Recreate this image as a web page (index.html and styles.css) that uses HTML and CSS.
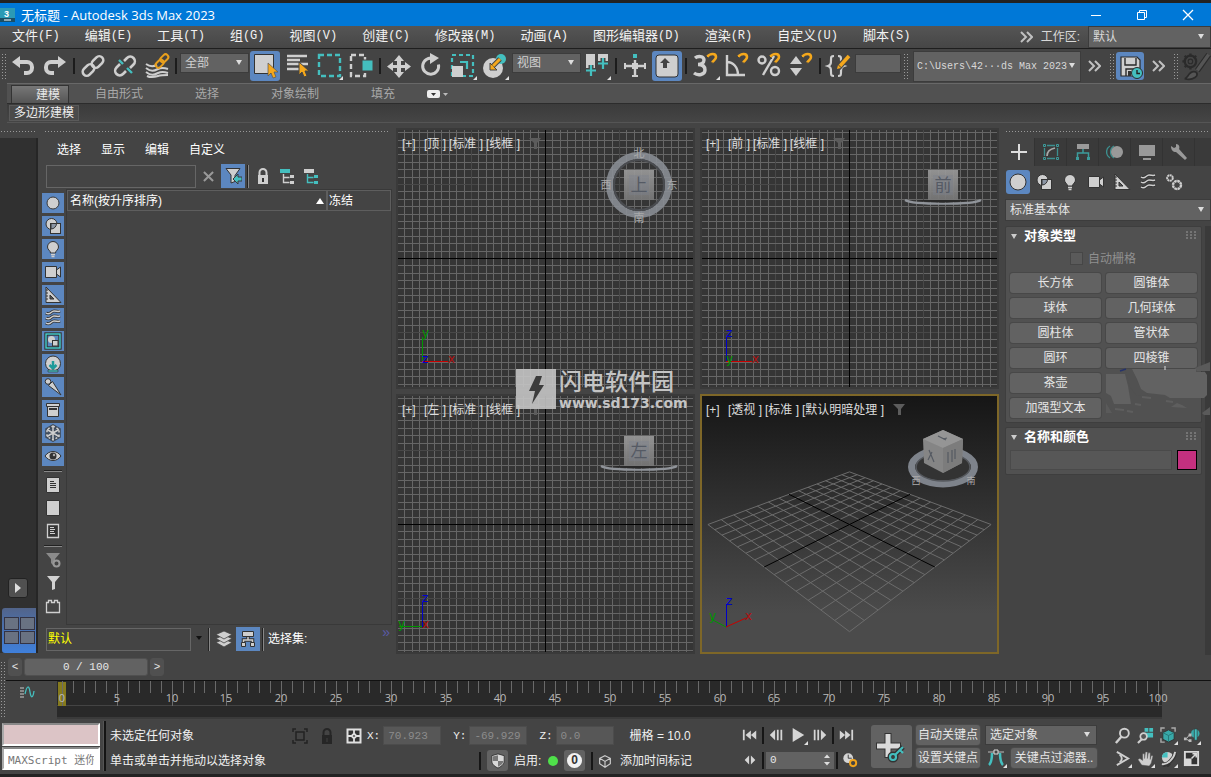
FILE: index.html
```html
<!DOCTYPE html>
<html lang="zh-CN">
<head>
<meta charset="utf-8">
<title>无标题 - Autodesk 3ds Max 2023</title>
<link rel="stylesheet" href="styles.css">
</head>
<body>
<svg class="defs" aria-hidden="true">
  <defs>
    <symbol id="flyout" viewBox="0 0 4 4"><path d="M4 0v4H0z" fill="#e0e0e0"/></symbol>
    <symbol id="i-dots" viewBox="0 0 12 12"><path d="M1 2h2M5 2h2M9 2h2M1 5h2M5 5h2M9 5h2M1 8h2M5 8h2M9 8h2" stroke="#999" stroke-width="1"/></symbol>
    <symbol id="i-chev" viewBox="0 0 14 14"><path d="M2 2l5 5-5 5M8 2l5 5-5 5" fill="none" stroke="#c0c0c0" stroke-width="2"/></symbol>
    <symbol id="i-undo" viewBox="0 0 32 32"><path d="M5 12l8-6v4h7a7 7 0 0 1 7 7v1a7 7 0 0 1-7 7h-3v-4h3a3 3 0 0 0 3-3v-1a3 3 0 0 0-3-3h-7v4z" fill="#cfcfcf"/></symbol>
    <symbol id="i-link" viewBox="0 0 32 32"><g fill="none" stroke="#cfcfcf" stroke-width="2.600"><rect x="14" y="8" width="13" height="8" rx="4" transform="rotate(-45 20.500 12)"/><rect x="5" y="16" width="13" height="8" rx="4" transform="rotate(-45 11.500 20)"/></g></symbol>
    <symbol id="i-unlink" viewBox="0 0 32 32"><g fill="none" stroke="#cfcfcf" stroke-width="2.600"><path d="M15 11l3-3a4.500 4.500 0 0 1 6.500 6.500l-3.500 3.500M17 21l-3 3a4.500 4.500 0 0 1-6.500-6.500l3.500-3.500"/></g><path d="M10 10l4 4M18 18l5 5" stroke="#44bfbf" stroke-width="2.400"/></symbol>
    <symbol id="i-bind" viewBox="0 0 32 32"><g fill="none" stroke="#cfcfcf" stroke-width="2"><path d="M5 14c4 3 7 3 11 1M5 18c5 4 8 3 12 1s7-1 10 0M5 22c5 4 8 3 12 1s7-1 10 0M6 26c4 2 8 1 11 0s7-1 10-1"/></g><g fill="none" stroke="#e9a01d" stroke-width="2"><rect x="19" y="5.500" width="9" height="5.500" rx="2.700" transform="rotate(-45 23.500 8.500)"/><rect x="14" y="11" width="9" height="5.500" rx="2.700" transform="rotate(-45 18.500 13.500)"/></g></symbol>
    <symbol id="i-byname" viewBox="0 0 32 32"><path d="M6 6h20M6 10h13M6 14h21M6 19h12" stroke="#cfcfcf" stroke-width="2.600"/><path d="M18 12v13l3-3 2 5 3-1-2-5h4z" fill="#f5a81c" stroke="#444"/></symbol>
    <symbol id="i-region" viewBox="0 0 32 32"><rect x="6" y="5" width="21" height="21" fill="none" stroke="#44bfbf" stroke-width="2.400" stroke-dasharray="5 3"/><path d="M30 26v4h-4z" fill="#e0e0e0"/></symbol>
    <symbol id="i-window" viewBox="0 0 32 32"><rect x="6" y="5" width="14" height="21" fill="none" stroke="#cfcfcf" stroke-width="2.400" stroke-dasharray="5 3"/><path d="M17 10h11v11H17z" fill="#44bfbf" stroke="#444"/></symbol>
    <symbol id="i-move" viewBox="0 0 32 32"><path d="M16 5l5 6h-3v4h4v-3l6 4.500-6 4.500v-3h-4v4h3l-5 6-5-6h3v-4h-4v3l-6-4.500 6-4.500v3h4v-4h-3z" fill="#cfcfcf"/></symbol>
    <symbol id="i-rotate" viewBox="0 0 32 32"><path d="M18 8.500a8 8 0 1 0 5.500 6" fill="none" stroke="#cfcfcf" stroke-width="3"/><path d="M15 3l9 5-9 6z" fill="#cfcfcf"/></symbol>
    <symbol id="i-scale" viewBox="0 0 32 32"><rect x="5" y="5" width="21" height="21" fill="none" stroke="#44bfbf" stroke-width="2.200" stroke-dasharray="4 3"/><path d="M5 16h11v11H5z" fill="#cfcfcf"/><path d="M13 12h7v7" fill="none" stroke="#44bfbf" stroke-width="2.200"/><path d="M30 26v4h-4z" fill="#e0e0e0"/></symbol>
    <symbol id="i-place" viewBox="0 0 32 32"><circle cx="14" cy="18" r="10" fill="#cfcfcf"/><circle cx="22" cy="9" r="5" fill="#44bfbf"/><path d="M21 9l-8 8" stroke="#444" stroke-width="5"/><path d="M11 13v7h7z" fill="#f5a81c" stroke="#444"/><path d="M21 9l-7 7" stroke="#f5a81c" stroke-width="3"/><path d="M30 26v4h-4z" fill="#e0e0e0"/></symbol>
    <symbol id="i-pivot" viewBox="0 0 32 32"><path d="M5 4h9v16H5zM17 4h10v9H17z" fill="#cfcfcf"/><path d="M10 15v11M5 20.500h10M22 8v11M17 13.500h10" stroke="#444" stroke-width="5"/><path d="M10 15v11M5 20.500h10M22 8v11M17 13.500h10" stroke="#44bfbf" stroke-width="2.200"/><path d="M30 26v4h-4z" fill="#e0e0e0"/></symbol>
    <symbol id="i-manip" viewBox="0 0 32 32"><path d="M16 10v17M6 16h20" stroke="#cfcfcf" stroke-width="2.400"/><path d="M13 13h6v6h-6zM5 13h2v6H5zM25 13h2v6h-2zM13 25h6v2h-6z" fill="#cfcfcf"/><path d="M14 4h4v4h-4z" fill="#44bfbf"/></symbol>
    <symbol id="i-keyb" viewBox="0 0 32 32"><rect x="5" y="5" width="22" height="22" rx="3" fill="#cfcfcf" stroke="#333"/><path d="M14 8l5 5h-3v5h-4v-5H9z" fill="#444"/></symbol>
    <symbol id="magnet" viewBox="0 0 14 14"><path d="M2 5c3-4 9-4 9 0 0 3-3 3-4 6" fill="none" stroke="#f5a81c" stroke-width="2.600"/><path d="M1 4l3 3M5.500 10.500l4 1" stroke="#444" stroke-width="1"/></symbol>
    <symbol id="i-snap" viewBox="0 0 32 32"><path d="M6 8c3-2.500 9-2 9 2 0 3-3 4.500-6 4.500 4 0 7 1.500 7 5.500 0 5-7 6-11 3" fill="none" stroke="#cfcfcf" stroke-width="3.400"/><use href="#magnet" x="16" y="2" width="14" height="14"/><path d="M31 26v4h-4z" fill="#e0e0e0"/></symbol>
    <symbol id="i-angle" viewBox="0 0 32 32"><path d="M6 5v20h18M6 12c6 0 11 5 11 13" fill="none" stroke="#cfcfcf" stroke-width="2.400"/><use href="#magnet" x="15" y="2" width="14" height="14"/></symbol>
    <symbol id="i-percent" viewBox="0 0 32 32"><circle cx="9" cy="10" r="3.500" fill="none" stroke="#cfcfcf" stroke-width="2.400"/><circle cx="22" cy="21" r="4" fill="none" stroke="#cfcfcf" stroke-width="2.400"/><path d="M21 6L10 25" stroke="#cfcfcf" stroke-width="2.400"/><use href="#magnet" x="15" y="2" width="14" height="14"/></symbol>
    <symbol id="i-spin" viewBox="0 0 32 32"><path d="M5 14l6-8 6 8zM5 18h12l-6 8z" fill="#cfcfcf"/><use href="#magnet" x="15" y="2" width="14" height="14"/></symbol>
    <symbol id="i-braces" viewBox="0 0 32 32"><path d="M11 6c-3 0-3 1-3 4s0 5-3 6c3 1 3 3 3 6s0 4 3 4M15 6c3 0 3 1 3 4s0 5 3 6c-3 1-3 3-3 6s0 4-3 4" fill="none" stroke="#cfcfcf" stroke-width="2.200"/><path d="M26 6L15 18" stroke="#444" stroke-width="6"/><path d="M26 6l-9 10" stroke="#f5a81c" stroke-width="3.500"/><path d="M14 19l1-4 3 3z" fill="#f5a81c"/></symbol>
    <symbol id="i-save" viewBox="0 0 28 28"><path d="M5 5h16l3 3v16H5z" fill="#cfcfcf" stroke="#2a2a2a" stroke-width="1.200"/><path d="M9 6v7h11V6M10 24v-7h8v7" fill="none" stroke="#2a2a2a" stroke-width="1.400"/><path d="M12 19h3v5h-3z" fill="#333"/><circle cx="21" cy="21" r="5.500" fill="#44bfbf" stroke="#2a2a2a"/><path d="M21 18v3.500h3" fill="none" stroke="#222" stroke-width="1.400"/></symbol>
    <symbol id="i-brush" viewBox="0 0 28 28"><circle cx="10" cy="10" r="5" fill="none" stroke="#2b2b2b" stroke-width="2"/><circle cx="10" cy="10" r="2" fill="none" stroke="#2b2b2b"/><path d="M10 3v3M10 14v3M3 10h3M5 5l2 2M15 5l-2 2M5 15l2-2" stroke="#2b2b2b" stroke-width="2"/><path d="M26 4L16 18" stroke="#2b2b2b" stroke-width="5"/><path d="M26 4L16 18" stroke="#555" stroke-width="3"/><path d="M5 25c3 0 3-6 8-6 3 0 4 3 1 5s-6 2-9 1z" fill="#555" stroke="#2b2b2b" stroke-width="1.500"/></symbol>

    <symbol id="e-circle" viewBox="0 0 18 18"><circle cx="9" cy="9" r="6" fill="#cfcfcf" stroke="#3a3a3a"/></symbol>
    <symbol id="e-shapes" viewBox="0 0 18 18"><circle cx="7.500" cy="7" r="5.500" fill="#cfcfcf" stroke="#333"/><rect x="6.500" y="6.500" width="10" height="10" fill="#cfcfcf" stroke="#333"/><path d="M7 12a5.500 5.500 0 0 0 5.500-5.500H7z" fill="#8a94a3" stroke="#333"/></symbol>
    <symbol id="e-bulb" viewBox="0 0 18 18"><path d="M9 1.500a5.500 5.500 0 0 0-5.500 5.500c0 3 3 3.500 3 6h5c0-2.500 3-3 3-6A5.500 5.500 0 0 0 9 1.500z" fill="#cfcfcf" stroke="#333"/><path d="M7 14.500h4M7.500 16.500h3" stroke="#cfcfcf" stroke-width="1.500"/></symbol>
    <symbol id="e-cam" viewBox="0 0 18 18"><path d="M1.500 3.500h11v11h-11zM12.500 7l4-3v10l-4-3z" fill="#cfcfcf" stroke="#333"/></symbol>
    <symbol id="e-ruler" viewBox="0 0 18 18"><path d="M2 1v15.500h15z" fill="#cfcfcf" stroke="#333"/><path d="M6 9v4h4z" fill="#555" stroke="#333"/><path d="M2 4h2M2 7h2M2 10h2M2 13h2" stroke="#333"/></symbol>
    <symbol id="e-wave" viewBox="0 0 18 18"><g fill="none"><path d="M2 4c4 3 5-2 8-2s4 1 6 0M2 9c4 3 5-2 8-2s4 1 6 0M2 14c4 3 5-2 8-2s4 1 6 0" stroke="#333" stroke-width="3"/><path d="M2 4c4 3 5-2 8-2s4 1 6 0M2 9c4 3 5-2 8-2s4 1 6 0M2 14c4 3 5-2 8-2s4 1 6 0" stroke="#cfcfcf" stroke-width="1.500"/></g></symbol>
    <symbol id="e-group" viewBox="0 0 18 18"><rect x="2" y="2" width="14" height="14" fill="#5c87c0" stroke="#333" stroke-width="3.400"/><rect x="2" y="2" width="14" height="14" fill="none" stroke="#44dada" stroke-width="1.300"/><circle cx="7.500" cy="7.500" r="3.500" fill="#cfcfcf"/><rect x="8.500" y="8.500" width="5.500" height="5.500" fill="#cfcfcf" stroke="#333"/></symbol>
    <symbol id="e-xref" viewBox="0 0 18 18"><circle cx="9" cy="8.500" r="7.500" fill="#cfcfcf" stroke="#333"/><path d="M9 6v6M5.500 10L9 13.500 12.500 10" fill="none" stroke="#1d9a9a" stroke-width="2.500"/><path d="M4 15h10v2H4z" fill="#44bfbf" stroke="#333" stroke-width=".6"/></symbol>
    <symbol id="e-bone" viewBox="0 0 18 18"><path d="M4.500 7.500l4-4L17 17z" fill="#cfcfcf" stroke="#333"/><circle cx="4" cy="3.500" r="2.800" fill="#cfcfcf" stroke="#333"/></symbol>
    <symbol id="e-box" viewBox="0 0 18 18"><path d="M3.500 6v9.500h11V6" fill="#cfcfcf" stroke="#333"/><path d="M2.500 2.500h13v3h-13z" fill="#cfcfcf" stroke="#333"/><path d="M5 8h8" stroke="#333" stroke-width="2"/></symbol>
    <symbol id="e-flake" viewBox="0 0 18 18"><g fill="none" stroke="#3f4a58" stroke-width="3.600"><path d="M9 2v14M3 5.500l12 7M15 5.500l-12 7"/><path d="M9 2l6 3.500v7L9 16l-6-3.500v-7z"/></g><g stroke="#cfcfcf" stroke-width="1.500" fill="none"><path d="M9 2v14M3 5.500l12 7M15 5.500l-12 7"/><path d="M9 2l6 3.500v7L9 16l-6-3.500v-7z" stroke-dasharray="2 2"/></g></symbol>
    <symbol id="e-eye" viewBox="0 0 18 18"><path d="M1 9c4-6 12-6 16 0-4 6-12 6-16 0z" fill="#cfcfcf" stroke="#333"/><circle cx="9" cy="9" r="3.500" fill="#333"/><circle cx="10" cy="8" r="1.200" fill="#aaa"/></symbol>
    <symbol id="e-doc1" viewBox="0 0 18 18"><path d="M2.500 1.500h13v15h-13z" fill="#cfcfcf" stroke="#333"/><path d="M6 5.500h4M6 7.500h6M6 9.500h6M6 11.500h6" stroke="#333"/></symbol>
    <symbol id="e-doc2" viewBox="0 0 18 18"><path d="M2.500 1.500h13v15h-13z" fill="#cfcfcf" stroke="#333"/></symbol>
    <symbol id="e-doc3" viewBox="0 0 18 18"><path d="M3.500 2.500h11v13h-11z" fill="#333" stroke="#cfcfcf" stroke-width="1.300"/><path d="M6 5.500h4M6 7.500h5M6 9.500h4M6 11.500h5" stroke="#cfcfcf"/></symbol>
    <symbol id="e-filtgear" viewBox="0 0 18 18"><path d="M2 2h14l-5 6v8l-4-4V8z" fill="#8a8a8a"/><circle cx="12.500" cy="12.500" r="3" fill="#444" stroke="#999" stroke-width="2"/></symbol>
    <symbol id="e-filt" viewBox="0 0 18 18"><path d="M3 2h13l-5 6v7l-3 1V8z" fill="#d2d2d2"/></symbol>
    <symbol id="e-brick" viewBox="0 0 18 18"><path d="M2.500 5.500h2v-2h3v2h3v-2h3v2h2v10h-13z" fill="none" stroke="#cfcfcf" stroke-width="1.300"/></symbol>
    <symbol id="e-lock" viewBox="0 0 18 18"><path d="M5.500 8V5.500a3.500 3.500 0 0 1 7 0V8" fill="none" stroke="currentColor" stroke-width="2"/><path d="M4 8h10v9H4z" fill="currentColor"/><path d="M8 11h2v4H8z" fill="#333"/></symbol>
    <symbol id="e-tree1" viewBox="0 0 18 18"><path d="M2 2h10v4H2z" fill="#44bfbf"/><path d="M5.500 7v8.500h6M5.500 10.500h6" fill="none" stroke="#cfcfcf" stroke-width="1.400"/><path d="M12 8h4v3h-4zM12 14h4v3h-4z" fill="#cfcfcf"/></symbol>
    <symbol id="e-tree2" viewBox="0 0 18 18"><path d="M2 2h10v4H2z" fill="#cfcfcf"/><path d="M5.500 7v8.500h6M5.500 10.500h6" fill="none" stroke="#44bfbf" stroke-width="1.400"/><path d="M12 8h4v3h-4zM12 14h4v3h-4z" fill="#44bfbf"/></symbol>
    <symbol id="e-filtarrow" viewBox="0 0 18 18"><path d="M2 1.500h14l-5 7v6l-4 1.500V8z" fill="#cfcfcf" stroke="#333"/><path d="M18 10v4h-4v3l-5-5 5-5v3z" fill="#44bfbf" stroke="#3a3a3a" stroke-width="1"/></symbol>
    <symbol id="e-layers" viewBox="0 0 18 18"><g fill="#cfcfcf" stroke="#444" stroke-width=".8"><path d="M9 9l8 3.500L9 17l-8-4.500z"/><path d="M9 5l8 3.500L9 13 1 8.500z"/><path d="M9 1l8 3.500L9 9 1 4.500z"/></g></symbol>
    <symbol id="e-hier" viewBox="0 0 18 18"><path d="M9 7v3M4.500 12v-2h9v2" fill="none" stroke="#333" stroke-width="3.500"/><path d="M9 7v3M4.500 12v-2h9v2" fill="none" stroke="#cfcfcf" stroke-width="1.500"/><path d="M3.500 1.500h11v5h-11zM2.500 12.500h4v4h-4zM11.500 12.500h4v4h-4z" fill="#cfcfcf" stroke="#333"/></symbol>
    <symbol id="funnel" viewBox="0 0 12 12"><path d="M0 0h12L8 5v6H5V5z" fill="#5c5c5c"/></symbol>

    <symbol id="t-plus" viewBox="0 0 18 18"><path d="M9 1v16M1 9h16" stroke="#ddd" stroke-width="2"/></symbol>
    <symbol id="t-modify" viewBox="0 0 18 18"><path d="M2.500 5v8M15.500 5v8M5 2.500h8M5 15.500h8" fill="none" stroke="#3c8f8f" stroke-width="1.300"/><path d="M5 13c0-4 3-7 8-8" fill="none" stroke="#aaa" stroke-width="1.700"/><g fill="none" stroke="#3c9c9c"><path d="M1.500 1.500h2v2h-2zM14.500 1.500h2v2h-2zM1.500 14.500h2v2h-2zM14.500 14.500h2v2h-2z"/></g></symbol>
    <symbol id="t-hier" viewBox="0 0 18 18"><path d="M3 1h12v5H3z" fill="#9a9a9a"/><path d="M9 6v4M3.500 15v-5h11v5" fill="none" stroke="#3c9c9c" stroke-width="1.500"/><path d="M2 14h3v3H2zM13 14h3v3h-3z" fill="#3c9c9c"/></symbol>
    <symbol id="t-motion" viewBox="0 0 18 18"><g fill="none" stroke="#3c8f8f" stroke-width="1.400"><path d="M4 3a7 7 0 0 0 0 12M8 3a7 7 0 0 0 0 12"/></g><circle cx="11" cy="9" r="6" fill="#999"/></symbol>
    <symbol id="t-disp" viewBox="0 0 18 18"><path d="M1 2h16v11H1zM5 15h8v2H5z" fill="#999"/></symbol>
    <symbol id="t-wrench" viewBox="0 0 18 18"><path d="M1 3l3 2 2-1V1c3 0 4 3 3 5l8 9-2 2-9-8C3 9 1 7 1 3z" fill="#999"/></symbol>
    <symbol id="t-gears" viewBox="0 0 18 18"><circle cx="5" cy="5" r="2.800" fill="none" stroke="#cfcfcf" stroke-width="2" stroke-dasharray="2 .5"/><circle cx="12" cy="12" r="4" fill="none" stroke="#cfcfcf" stroke-width="2.400" stroke-dasharray="2.600 .5"/></symbol>

    <symbol id="p-start" viewBox="0 0 18 18"><path d="M1 3h2v12H1zM10 4v10L4 9zM16 4v10l-6-5z" fill="#d5d5d5"/></symbol>
    <symbol id="p-prev" viewBox="0 0 18 18"><path d="M8 3v12L2 9zM10 3h2v12h-2zM14 3h2v12h-2z" fill="#d5d5d5"/></symbol>
    <symbol id="p-play" viewBox="0 0 18 18"><path d="M3 1l13 8-13 8z" fill="#d5d5d5"/></symbol>
    <symbol id="p-key" viewBox="0 0 18 18"><path d="M8 4v10L3 9zM10 4v10l5-5z" fill="#d5d5d5"/></symbol>
    <symbol id="p-time" viewBox="0 0 18 18"><circle cx="7" cy="7" r="5.500" fill="#d5d5d5"/><path d="M7 3v4h4" fill="none" stroke="#333"/><circle cx="12.500" cy="12.500" r="3.500" fill="#444" stroke="#f0a31c" stroke-width="2.200"/></symbol>
    <symbol id="p-bigkey" viewBox="0 0 32 32"><path d="M13 2v25M1 15h25" stroke="#333" stroke-width="7"/><path d="M13 3v23M2 15h23" stroke="#dadada" stroke-width="5"/><g fill="none" stroke="#333" stroke-width="5"><circle cx="18" cy="26" r="3"/><path d="M20 24l8-8"/></g><g fill="none" stroke="#44bfbf" stroke-width="2.200"><circle cx="18" cy="26" r="3"/><path d="M20 24l8-8M25 19l3 3"/></g></symbol>
    <symbol id="p-tan" viewBox="0 0 18 18"><path d="M2 16c3-3 3-7 3-12M13 4c0 5 0 9 3 12" fill="none" stroke="#44bfbf" stroke-width="2.500"/><path d="M1 3h16" stroke="#bbb"/><path d="M7 1h4v4H7z" fill="#444" stroke="#ddd"/></symbol>
    <symbol id="n-zoom" viewBox="0 0 18 18"><circle cx="11" cy="6.500" r="4.700" fill="none" stroke="#cfcfcf" stroke-width="2"/><path d="M8 10l-6 7" stroke="#cfcfcf" stroke-width="2.600"/></symbol>
    <symbol id="n-zoomall" viewBox="0 0 18 18"><path d="M8 1h4v4H8zM13 1h4v4h-4zM8 6h9v5H8z" fill="#44bfbf"/><circle cx="7" cy="10" r="3.500" fill="#555" stroke="#cfcfcf" stroke-width="1.800"/><path d="M5 13l-4 4" stroke="#cfcfcf" stroke-width="2.200"/></symbol>
    <symbol id="n-extents" viewBox="0 0 18 18"><path d="M1 5V1h4M12 1h4v4M1 12v4h4" fill="none" stroke="#aaa" stroke-width="1.500"/><path d="M9 3l6 3v7l-6 3-6-3V6z" fill="#38a9a9" stroke="#333"/><path d="M3 6l6 3 6-3M9 9v7" fill="none" stroke="#267777"/></symbol>
    <symbol id="n-fov" viewBox="0 0 18 18"><circle cx="13" cy="7" r="4.500" fill="#38a9a9"/><path d="M12 2h3v12h-3z" fill="#44bfbf" stroke="#333" stroke-width=".7"/><path d="M1 11h3v3H1zM6 7h3v3H6zM6 13h3v3H6z" fill="#bbb"/><path d="M4 12l3-4M4 13l3 2" stroke="#bbb"/></symbol>
    <symbol id="n-eye" viewBox="0 0 18 18"><path d="M3 2l12 7-12 7" fill="none" stroke="#cfcfcf" stroke-width="2"/><path d="M6 5c3 2 3 6 0 8" fill="none" stroke="#cfcfcf" stroke-width="2"/></symbol>
    <symbol id="n-hand" viewBox="0 0 18 18"><path d="M5 16L1 10l2-1 3 2V4h2v5l1-7h2v7l1-6h2v7l1-4h2l-2 8-2 3z" fill="#cfcfcf" stroke="#555" stroke-width=".5"/></symbol>
    <symbol id="n-orbit" viewBox="0 0 18 18"><circle cx="8" cy="8" r="6" fill="#cfcfcf"/><path d="M2 8a6 6 0 0 1 6-6v6z" fill="#44bfbf"/><path d="M3 16C8 16 15 9 16 3M10 14l-3 3" fill="none" stroke="#333" stroke-width="4"/><path d="M2 15c6 1 13-6 14-13" fill="none" stroke="#cfcfcf" stroke-width="2"/></symbol>
    <symbol id="n-max" viewBox="0 0 18 18"><path d="M2 2h14v14H2z" fill="#333" stroke="#d8d8d8" stroke-width="2"/><path d="M1 9h8v8H1z" fill="#d8d8d8"/><path d="M9 9l5-5M10 4h4v4" fill="none" stroke="#d8d8d8" stroke-width="1.600"/></symbol>
    <symbol id="s-sel" viewBox="0 0 18 18"><path d="M2 5V2h3M13 2h3v3M2 13v3h3M13 16h3v-3M5 5h8v8H5z" fill="none" stroke="#222" stroke-width="1.500"/></symbol>
    <symbol id="s-abs" viewBox="0 0 18 18"><path d="M2.500 2.500h13v13h-13z" fill="#333" stroke="#e0e0e0" stroke-width="2"/><path d="M9 3v3M9 12v3M3 9h3M12 9h3M9 6.500L11.500 9 9 11.500 6.500 9z" fill="none" stroke="#e0e0e0" stroke-width="1.800"/></symbol>
    <symbol id="s-shield" viewBox="0 0 18 18"><path d="M9 1l7 2v6c0 4-4 6.500-7 8-3-1.500-7-4-7-8V3z" fill="#d8d8d8" stroke="#333"/><path d="M9 2.500V9h6c0 3-3 5-6 6.500V9H3V4z" fill="#777"/></symbol>
    <symbol id="s-cube" viewBox="0 0 18 18"><path d="M9 3l6 3v6l-6 4-6-4V6zM3 6l6 3.500L15 6M9 9.500V16" fill="none" stroke="#ccc" stroke-width="1.300"/></symbol>
    <linearGradient id="face" x1="0" y1="0" x2="0" y2="1"><stop offset="0" stop-color="#999"/><stop offset="1" stop-color="#777"/></linearGradient>
    <symbol id="cube-flat" viewBox="0 0 84 84"><path d="M4 57c8 5 68 5 76 0" fill="none" stroke="#90949a" stroke-width="2.200"/><path d="M16 57h52c-10 3-42 3-52 0z" fill="#292929"/><path d="M27 27h30v30H27z" fill="url(#face)" fill-opacity=".92"/><path d="M32 32h20v20H32z" fill="#7a8290" fill-opacity=".35"/></symbol>
  </defs>
</svg>

<div class="top-strip"></div>
<header class="titlebar">
  <svg class="app-icon" viewBox="0 0 16 16"><path d="M0 1h15v14H0z" fill="#2b9ab5"/><path d="M0 11h15v4H0z" fill="#1b4f66"/><text x="4" y="10" class="app-three">3</text><path d="M4 13h7" stroke="#fff"/></svg>
  <h1 class="title">无标题 - Autodesk 3ds Max 2023</h1>
  <div class="window-buttons">
    <button aria-label="最小化"><svg viewBox="0 0 12 12"><path d="M1 6.500h10" stroke="#fff"/></svg></button>
    <button aria-label="还原"><svg viewBox="0 0 12 12"><path d="M1.500 3.500h7v7h-7zM3.500 3.500v-2h7v7h-2" fill="none" stroke="#fff"/></svg></button>
    <button aria-label="关闭"><svg viewBox="0 0 12 12"><path d="M1 1l10 10M11 1L1 11" stroke="#fff" stroke-width="1.300"/></svg></button>
  </div>
</header>

<nav class="menubar">
  <button>文件<span class="key">(F)</span></button><button>编辑<span class="key">(E)</span></button><button>工具<span class="key">(T)</span></button><button>组<span class="key">(G)</span></button><button>视图<span class="key">(V)</span></button><button>创建<span class="key">(C)</span></button><button>修改器<span class="key">(M)</span></button><button>动画<span class="key">(A)</span></button><button>图形编辑器<span class="key">(D)</span></button><button>渲染<span class="key">(R)</span></button><button>自定义<span class="key">(U)</span></button><button>脚本<span class="key">(S)</span></button>
  <div class="workspace">
    <svg class="chev"><use href="#i-chev"/></svg>
    <label for="ws">工作区:</label>
    <span class="combo combo-ws"><select id="ws"><option>默认</option></select></span>
  </div>
</nav>

<div class="toolbar">
  <span class="grip"></span>
  <button class="tool" aria-label="撤消"><svg><use href="#i-undo"/></svg></button>
  <button class="tool flip" aria-label="重做"><svg><use href="#i-undo"/></svg></button>
  <span class="sep"></span>
  <button class="tool" aria-label="链接"><svg><use href="#i-link"/></svg></button>
  <button class="tool" aria-label="取消链接"><svg><use href="#i-unlink"/></svg></button>
  <button class="tool" aria-label="绑定到空间扭曲"><svg><use href="#i-bind"/></svg></button>
  <span class="sep"></span>
  <span class="combo combo-tool"><select aria-label="选择过滤器"><option>全部</option></select></span>
  <button class="tool on" aria-label="选择对象"><svg viewBox="0 0 32 32"><path d="M5.500 4.500h19v19h-19z" fill="#cfcfcf" stroke="#333"/><path d="M19 13v13l3-3 2 5 3-1-2-5h4z" fill="#f5a81c" stroke="#555" stroke-width=".7"/></svg></button>
  <button class="tool" aria-label="按名称选择"><svg><use href="#i-byname"/></svg></button>
  <button class="tool" aria-label="矩形选择区域"><svg><use href="#i-region"/></svg></button>
  <button class="tool" aria-label="窗口/交叉"><svg><use href="#i-window"/></svg></button>
  <span class="sep"></span>
  <button class="tool" aria-label="移动"><svg><use href="#i-move"/></svg></button>
  <button class="tool" aria-label="旋转"><svg><use href="#i-rotate"/></svg></button>
  <button class="tool" aria-label="缩放"><svg><use href="#i-scale"/></svg></button>
  <button class="tool" aria-label="放置"><svg><use href="#i-place"/></svg></button>
  <span class="combo combo-tool"><select aria-label="参考坐标系"><option>视图</option></select></span>
  <button class="tool" aria-label="轴点中心"><svg><use href="#i-pivot"/></svg></button>
  <span class="sep"></span>
  <button class="tool" aria-label="选择并操纵"><svg><use href="#i-manip"/></svg></button>
  <button class="tool on" aria-label="键盘快捷键覆盖"><svg><use href="#i-keyb"/></svg></button>
  <span class="sep"></span>
  <button class="tool" aria-label="捕捉开关"><svg><use href="#i-snap"/></svg></button>
  <button class="tool" aria-label="角度捕捉"><svg><use href="#i-angle"/></svg></button>
  <button class="tool" aria-label="百分比捕捉"><svg><use href="#i-percent"/></svg></button>
  <button class="tool" aria-label="微调器捕捉"><svg><use href="#i-spin"/></svg></button>
  <span class="sep"></span>
  <button class="tool" aria-label="编辑命名选择集"><svg><use href="#i-braces"/></svg></button>
  <input class="set-name" aria-label="命名选择集">
  <span class="grip"></span>
  <span class="combo combo-path"><select aria-label="项目文件夹"><option>C:\Users\42···ds Max 2023</option></select></span>
  <button class="more" aria-label="更多"><svg class="chev"><use href="#i-chev"/></svg></button>
  <span class="grip"></span>
  <button class="tool tool-save on" aria-label="自动备份"><svg><use href="#i-save"/></svg></button>
  <button class="more" aria-label="更多"><svg class="chev"><use href="#i-chev"/></svg></button>
  <span class="grip"></span>
  <button class="tool" aria-label="脚本"><svg><use href="#i-brush"/></svg></button>
</div>

<div class="ribbon">
  <div class="ribbon-tabs">
    <button class="current">建模</button><button>自由形式</button><button>选择</button><button>对象绘制</button><button>填充</button>
    <svg class="ribbon-min" viewBox="0 0 26 10"><rect x="5" y="1" width="13" height="8" rx="2" fill="#eee"/><path d="M9 4h5l-2.500 3z" fill="#333"/><path d="M21 4h5l-2.500 3z" fill="#bbb"/></svg>
  </div>
  <div class="ribbon-panel"><button>多边形建模</button></div>
</div>

<main class="main">
  <aside class="dock">
    <span class="hgrip"></span>
    <div class="dock-body">
      <button class="dock-play" aria-label="展开"><svg viewBox="0 0 8 10"><path d="M1 0l6 5-6 5z" fill="#ddd"/></svg></button>
      <button class="dock-layout" aria-label="四视口布局"><span></span><span></span><span></span><span></span></button>
    </div>
  </aside>

  <section class="explorer">
    <span class="hgrip"></span>
    <nav class="exp-menu"><button>选择</button><button>显示</button><button>编辑</button><button>自定义</button></nav>
    <div class="exp-search">
      <input aria-label="查找">
      <button class="clear" aria-label="清除"><svg viewBox="0 0 12 12"><path d="M1 1l10 10M11 1L1 11" stroke="#999" stroke-width="2.200"/></svg></button>
      <button class="sq on" aria-label="过滤"><svg><use href="#e-filtarrow"/></svg></button>
      <span class="vsep"></span>
      <button class="sq" aria-label="锁定"><svg><use href="#e-lock"/></svg></button>
      <button class="sq" aria-label="层次"><svg><use href="#e-tree1"/></svg></button>
      <button class="sq" aria-label="全部层次"><svg><use href="#e-tree2"/></svg></button>
    </div>
    <div class="exp-body">
      <div class="exp-icons">
        <button class="on" aria-label="几何体"><svg><use href="#e-circle"/></svg></button>
        <button class="on" aria-label="图形"><svg><use href="#e-shapes"/></svg></button>
        <button class="on" aria-label="灯光"><svg><use href="#e-bulb"/></svg></button>
        <button class="on" aria-label="摄影机"><svg><use href="#e-cam"/></svg></button>
        <button class="on" aria-label="辅助对象"><svg><use href="#e-ruler"/></svg></button>
        <button class="on" aria-label="空间扭曲"><svg><use href="#e-wave"/></svg></button>
        <button class="on" aria-label="组"><svg><use href="#e-group"/></svg></button>
        <button class="on" aria-label="外部参照"><svg><use href="#e-xref"/></svg></button>
        <button class="on" aria-label="骨骼"><svg><use href="#e-bone"/></svg></button>
        <button class="on" aria-label="容器"><svg><use href="#e-box"/></svg></button>
        <button class="on" aria-label="冻结"><svg><use href="#e-flake"/></svg></button>
        <button class="on" aria-label="隐藏"><svg><use href="#e-eye"/></svg></button>
        <span class="hsep"></span>
        <button aria-label="全选"><svg><use href="#e-doc1"/></svg></button>
        <button aria-label="全不选"><svg><use href="#e-doc2"/></svg></button>
        <button aria-label="反选"><svg><use href="#e-doc3"/></svg></button>
        <span class="hsep"></span>
        <button aria-label="高级过滤"><svg><use href="#e-filtgear"/></svg></button>
        <button aria-label="过滤器"><svg><use href="#e-filt"/></svg></button>
        <button aria-label="配置"><svg><use href="#e-brick"/></svg></button>
      </div>
      <div class="exp-tree">
        <table><thead><tr><th class="col-name"><span>名称(按升序排序)</span><i></i></th><th class="col-frozen">冻结</th></tr></thead></table>
      </div>
    </div>
    <div class="exp-foot">
      <span class="combo combo-exp"><select aria-label="资源管理器"><option>默认</option></select></span>
      <span class="vsep"></span>
      <button class="sq" aria-label="层"><svg><use href="#e-layers"/></svg></button>
      <button class="sq on" aria-label="层次排序"><svg><use href="#e-hier"/></svg></button>
      <span class="vsep"></span>
      <span class="set-label">选择集:</span>
      <span class="foot-more">»</span>
    </div>
  </section>

  <section class="viewports">
    <div class="view">
      <svg class="grid-canvas" data-grid="flat"></svg>
      <div class="view-labels"><button class="plus">[+]</button><button>[顶 ]</button><button>[标准 ]</button><button>[线框 ]</button><svg><use href="#funnel"/></svg></div>
      <svg class="viewcube" viewBox="0 0 84 84"><circle cx="42" cy="42" r="29.500" fill="none" stroke="#8b8f96" stroke-opacity=".88" stroke-width="7"/><circle cx="42" cy="42" r="25" fill="none" stroke="#4a4c50" stroke-width="2"/><path d="M27 27h30v30H27z" fill="url(#face)" fill-opacity=".92"/><path d="M32 32h20v20H32z" fill="#7a8290" fill-opacity=".35"/><text x="42" y="48" class="face-text">上</text><text x="42" y="14" class="compass">北</text><text x="42" y="79" class="compass">南</text><text x="9" y="46" class="compass">西</text><text x="75" y="46" class="compass">东</text></svg>
      <svg class="axis" viewBox="0 0 64 48"><path d="M27.500 37V12" stroke="#009600"/><path d="M27 36.500h26" stroke="#c80000"/><text x="27" y="12" fill="#009600">y</text><text x="27" y="38" fill="#0000d0">z</text><text x="53" y="38" fill="#b01010">x</text></svg>
    </div>
    <div class="view">
      <svg class="grid-canvas" data-grid="flat"></svg>
      <div class="view-labels"><button class="plus">[+]</button><button>[前 ]</button><button>[标准 ]</button><button>[线框 ]</button><svg><use href="#funnel"/></svg></div>
      <svg class="viewcube" viewBox="0 0 84 84"><use href="#cube-flat"/><text x="42" y="48" class="face-text">前</text></svg>
      <svg class="axis" viewBox="0 0 64 48"><path d="M27.500 37V12" stroke="#0000c8"/><path d="M27 36.500h26" stroke="#c80000"/><text x="27" y="12" fill="#0000d0">z</text><text x="27" y="38" fill="#009600">y</text><text x="53" y="38" fill="#b01010">x</text></svg>
    </div>
    <div class="view">
      <svg class="grid-canvas" data-grid="flat"></svg>
      <div class="view-labels"><button class="plus">[+]</button><button>[左 ]</button><button>[标准 ]</button><button>[线框 ]</button><svg><use href="#funnel"/></svg></div>
      <svg class="viewcube" viewBox="0 0 84 84"><use href="#cube-flat"/><text x="42" y="48" class="face-text">左</text></svg>
      <svg class="axis" viewBox="0 0 64 48"><path d="M27.500 37V12" stroke="#0000c8"/><path d="M27 36.500H4" stroke="#009600"/><text x="27" y="12" fill="#0000d0">z</text><text x="3" y="38" fill="#009600">y</text><text x="27" y="38" fill="#b01010">x</text></svg>
    </div>
    <div class="view active">
      <svg class="grid-canvas" data-grid="perspective"></svg>
      <div class="view-labels"><button class="plus">[+]</button><button>[透视 ]</button><button>[标准 ]</button><button>[默认明暗处理 ]</button><svg><use href="#funnel"/></svg></div>
      <svg class="viewcube" viewBox="0 0 84 84"><ellipse cx="42" cy="58" rx="31.500" ry="17" fill="#333" stroke="#7e838b" stroke-width="7"/><ellipse cx="42" cy="58" rx="27" ry="14" fill="none" stroke="#55585d" stroke-width="1.500"/><path d="M42 21l20 9-1 24-19 10-19-10-1-24z" fill="#858585"/><path d="M42 21l20 9-20 9-20-9z" fill="#959595"/><path d="M42 39v25l19-10 1-24z" fill="#7c7c7c"/><path d="M37 27l8 4M42 30l4-1M28 41l5 12M31 43l-4 8M47 43v11M51 41v12M54 40v10" stroke="#555a62" fill="none" stroke-width="1.200"/><text x="15" y="75" class="compass small">西</text><text x="70" y="75" class="compass small">南</text></svg>
      <svg class="axis" viewBox="0 0 64 48"><path d="M27.500 37V14" stroke="#0000c8"/><path d="M27 37L12 29" stroke="#009600"/><path d="M27 37l20-9" stroke="#c80000"/><text x="27" y="15" fill="#0000d0">z</text><text x="10" y="30" fill="#009600">y</text><text x="46" y="30" fill="#b01010">x</text></svg>
    </div>
    <div class="watermark">
      <svg viewBox="0 0 40 40"><path d="M0 0h40v40H0z" fill="#c4c4c4" fill-opacity=".9"/><path d="M20 7h6l-3 9h5L16 35l3-13h-6z" fill="#3c3c3c"/></svg>
      <div><strong>闪电软件园</strong><span>www.sd173.com</span></div>
    </div>
  </section>

  <aside class="command">
    <span class="hgrip"></span>
    <div class="cmd-tabs">
      <button class="current" aria-label="创建"><svg><use href="#t-plus"/></svg></button>
      <button aria-label="修改"><svg><use href="#t-modify"/></svg></button>
      <button aria-label="层次"><svg><use href="#t-hier"/></svg></button>
      <button aria-label="运动"><svg><use href="#t-motion"/></svg></button>
      <button aria-label="显示"><svg><use href="#t-disp"/></svg></button>
      <button aria-label="实用程序"><svg><use href="#t-wrench"/></svg></button>
    </div>
    <div class="cmd-cats">
      <button class="on" aria-label="几何体"><svg><circle cx="9" cy="9" r="8" fill="#cfcfcf" stroke="#333"/></svg></button>
      <button aria-label="图形"><svg><use href="#e-shapes"/></svg></button>
      <button aria-label="灯光"><svg><use href="#e-bulb"/></svg></button>
      <button aria-label="摄影机"><svg><use href="#e-cam"/></svg></button>
      <button aria-label="辅助对象"><svg><use href="#e-ruler"/></svg></button>
      <button aria-label="空间扭曲"><svg><use href="#e-wave"/></svg></button>
      <button aria-label="系统"><svg><use href="#t-gears"/></svg></button>
    </div>
    <span class="combo combo-cmd"><select aria-label="类别"><option>标准基本体</option></select></span>
    <div class="cmd-body">
      <div class="rollouts">
        <section class="rollout types">
          <h2><i></i>对象类型<svg><use href="#i-dots"/></svg></h2>
          <label class="autogrid"><input type="checkbox" disabled>自动栅格</label>
          <div class="type-grid">
            <button>长方体</button><button>圆锥体</button>
            <button>球体</button><button>几何球体</button>
            <button>圆柱体</button><button>管状体</button>
            <button>圆环</button><button>四棱锥</button>
            <button>茶壶</button><span></span>
            <button>加强型文本</button><span></span>
          </div>
          <svg class="smudge" viewBox="0 0 108 56"><path d="M90 7l15-6v9H92zM97 52l8-6v8h-6z" fill="#5a5a5a"/><path d="M1 13h19l3 12 3 18H9l-3-8-5-3z" fill="#626262"/><path d="M20 8h8l5 14 6 8 6 5-14-1-6-8z" fill="#515151"/><path d="M27 8h64v3h9l2 3v20l-3 3H65l-5-3-18-2-6-4-4-10z" fill="#626262"/><path d="M37 36l9 1M30 43l6 1M61 40l7 1M10 48l9 1M22 50l6 1" stroke="#5e5e5e" stroke-width="2"/><path d="M66 46l6-4 5 2 5 3z" fill="#5e5e5e"/><path d="M1 42l6 10H1z" fill="#5a5a5a"/><path d="M15 10l6-2" stroke="#26336a" stroke-width="1.500"/><path d="M60 5v4" stroke="#ddd"/></svg>
        </section>
        <section class="rollout namecolor">
          <h2><i></i>名称和颜色<svg><use href="#i-dots"/></svg></h2>
          <div class="name-row"><input aria-label="名称" disabled><button class="swatch" aria-label="对象颜色"></button></div>
        </section>
      </div>
      <div class="cmd-scroll"></div>
    </div>
  </aside>
</main>

<section class="timeline">
  <span class="grip"></span>
  <div class="time-body">
    <div class="slider-row"><button class="step">&lt;</button><button class="slider">0 / 100</button><button class="step">&gt;</button></div>
    <div class="track-row">
      <button class="curve" aria-label="曲线编辑器"><svg viewBox="0 0 16 14"><path d="M0 2h4M0 5h4M0 8h4M0 11h4" stroke="#ccc"/><path d="M5 8c2-9 4-9 5-2s3 6 4-1" fill="none" stroke="#44bfbf" stroke-width="1.300"/></svg></button>
      <svg class="ruler"></svg>
    </div>
  </div>
</section>

<footer class="status">
  <div class="listener"><input class="pink" aria-label="宏录制器"><input class="mini" aria-label="侦听器" value="MAXScript 迷你"></div>
  <span class="vbar"></span>
  <div class="prompt">
    <div class="prompt-row">
      <span class="msg">未选定任何对象</span>
      <button class="ico" aria-label="孤立当前选择"><svg><use href="#s-sel"/></svg></button>
      <button class="ico dim" aria-label="选择锁定"><svg><use href="#e-lock"/></svg></button>
      <button class="ico" aria-label="绝对模式"><svg><use href="#s-abs"/></svg></button>
      <label class="coord">X:<input value="70.923" disabled></label>
      <label class="coord">Y:<input value="-69.929" disabled></label>
      <label class="coord">Z:<input value="0.0" disabled></label>
      <span class="gridsize">栅格 = 10.0</span>
    </div>
    <div class="prompt-row">
      <span class="msg hint">单击或单击并拖动以选择对象</span>
      <span class="bar"></span>
      <button class="chip" aria-label="安全"><svg><use href="#s-shield"/></svg></button>
      <span class="enable">启用:</span><span class="led"></span>
      <button class="chip zero"><b>0</b></button>
      <span class="bar"></span>
      <svg class="tagcube"><use href="#s-cube"/></svg>
      <a href="#" class="tag">添加时间标记</a>
    </div>
  </div>
  <div class="playback">
    <div><button aria-label="转到开头"><svg><use href="#p-start"/></svg></button><span class="bar"></span><button aria-label="上一帧"><svg><use href="#p-prev"/></svg></button><button aria-label="播放"><svg><use href="#p-play"/></svg><svg class="fly"><use href="#flyout"/></svg></button><button class="flip" aria-label="下一帧"><svg><use href="#p-prev"/></svg></button><span class="bar"></span><button class="flip" aria-label="转到结尾"><svg><use href="#p-start"/></svg></button></div>
    <div><button aria-label="关键点模式"><svg><use href="#p-key"/></svg></button><span class="bar"></span><span class="frame"><input value="0" aria-label="当前帧"><svg viewBox="0 0 6 12"><path d="M0 4l3-3.500L6 4zM0 8h6l-3 3.500z" fill="#ddd"/></svg></span><span class="bar"></span><button aria-label="时间配置"><svg><use href="#p-time"/></svg></button></div>
  </div>
  <button class="bigkey" aria-label="设置关键点"><svg><use href="#p-bigkey"/></svg></button>
  <div class="keys"><button>自动关键点</button><button>设置关键点</button></div>
  <div class="keysel">
    <span class="combo combo-key"><select aria-label="选择集"><option>选定对象</option></select></span>
    <div class="keyrow"><button class="ico" aria-label="切线"><svg><use href="#p-tan"/></svg><svg class="fly"><use href="#flyout"/></svg></button><button class="filters">关键点过滤器..</button></div>
  </div>
  <div class="nav">
    <button aria-label="缩放"><svg><use href="#n-zoom"/></svg></button><button aria-label="缩放所有"><svg><use href="#n-zoomall"/></svg></button><button aria-label="最大化显示"><svg><use href="#n-extents"/></svg><svg class="fly"><use href="#flyout"/></svg></button><button aria-label="所有视图最大化"><svg><use href="#n-fov"/></svg><svg class="fly"><use href="#flyout"/></svg></button>
    <button aria-label="视野"><svg><use href="#n-eye"/></svg><svg class="fly"><use href="#flyout"/></svg></button><button aria-label="平移"><svg><use href="#n-hand"/></svg><svg class="fly"><use href="#flyout"/></svg></button><button aria-label="环绕"><svg><use href="#n-orbit"/></svg><svg class="fly"><use href="#flyout"/></svg></button><button aria-label="最大化视口"><svg><use href="#n-max"/></svg></button>
  </div>
</footer>
<div class="bottom-strip"></div>
<script src="app.js"></script>
</body>
</html>
```

FILE: styles.css
```css
* { box-sizing: border-box; }
body {
  margin: 0; height: 100vh; display: flex; flex-direction: column; overflow: hidden;
  background: #444; color: #e6e6e6;
  font: 12px/16px "Liberation Sans", "Noto Sans CJK SC", sans-serif;
}
button, input, select { font: inherit; color: inherit; margin: 0; padding: 0; border: 0; background: none; border-radius: 0; min-width: 0; }
button { display: flex; align-items: center; justify-content: center; white-space: nowrap; flex: none; }
svg { display: block; flex: none; }
.defs { position: absolute; width: 0; height: 0; }
.top-strip, .bottom-strip { height: 3px; flex: none; background: #222; }
.flip { transform: scaleX(-1); }

.combo { position: relative; display: block; flex: none; background: #626262; border: 1px solid #3c3c3c; }
.combo select { appearance: none; display: block; width: 100%; height: 100%; padding: 0 16px 0 4px; outline: 0; }
.combo::after { content: ""; position: absolute; right: 6px; top: 50%; margin-top: -3px; border: 3px solid transparent; border-top: 5px solid #ddd; border-bottom: 0; pointer-events: none; }

.titlebar { height: 23px; flex: none; display: flex; align-items: center; background: #0078d7; }
.app-icon { width: 16px; height: 16px; }
.app-three { font: bold 9px "Liberation Sans", sans-serif; fill: #fff; }
.title { margin: 0 auto 0 5px; font: 13px/20px "Open Sans", "Noto Sans CJK SC", sans-serif; color: #fff; }
.window-buttons { display: flex; }
.window-buttons button { width: 46px; height: 23px; }
.window-buttons svg { width: 12px; height: 12px; }

.menubar { height: 23px; flex: none; display: flex; align-items: center; padding: 0 0 2px 12px; gap: 25px; background: linear-gradient(#555, #464646); border-bottom: 1px solid #1e1e1e; font-size: 13px; }
.menubar > button { color: #f2f2f2; height: 18px; }
.key { font: 12px "Liberation Mono", monospace; }
.workspace { margin: 2px 0 0 auto; display: flex; align-items: center; gap: 8px; font-size: 12px; color: #d8d8d8; }
.chev { width: 14px; height: 14px; }
.combo-ws { width: 123px; height: 22px; font-size: 12px; }

.toolbar { height: 34px; flex: none; display: flex; align-items: center; overflow: hidden; }
.grip { width: 5px; height: 26px; margin: 0 1px; flex: none; background: radial-gradient(circle, #b0b0b0 0 1px, transparent 1px) 0 0 / 3px 3px; opacity: .8; }
.sep { width: 2px; height: 16px; margin: 0 2px; background: #1c1c1c; flex: none; }
.tool { width: 32px; height: 32px; }
.tool svg { width: 32px; height: 32px; }
.tool.on { width: 30px; height: 30px; margin: 0 1px; border-radius: 3px; background: #5c87c0; }
.tool.tool-save { width: 28px; height: 28px; margin: 0 1px; }
.tool-save svg { width: 28px; height: 28px; }
.combo-tool { width: 69px; height: 20px; margin: 0 0 6px 1px; color: #d0d0d0; font-size: 12px; }
.set-name { width: 48px; height: 19px; margin-bottom: 6px; background: #626262; border: 1px solid #3c3c3c; }
.toolbar .grip ~ .grip { margin-left: 2px; }
.combo-path { width: 168px; height: 31px; margin-left: 4px; color: #d8d8d8; font: 10px "Liberation Mono", monospace; }
.combo-path select { padding: 0 11px 0 3px; }
.combo-path::after { right: 5px; }
.more { width: 26px; height: 30px; }

.ribbon { flex: none; padding-left: 7px; }
.ribbon-tabs { height: 21px; display: flex; align-items: flex-end; padding-left: 4px; background: #515151; border-top: 1px solid #686868; border-bottom: 1px solid #2c2c2c; color: #a8a8a8; }
.ribbon-tabs button { height: 18px; padding: 0 26px; }
.ribbon-tabs .current { padding: 0 8px 0 24px; color: #e8e8e8; background: linear-gradient(#777, #555); border: 1px solid #333; border-bottom: 0; }
.ribbon-min { width: 26px; height: 10px; margin: 0 0 4px 1px; }
.ribbon-panel { height: 19px; display: flex; padding: 1px 2px; background: linear-gradient(#3b3b3b, #454545); border-bottom: 1px solid #555; }
.ribbon-panel button { padding: 0 4px; border: 1px solid #5a5a5a; background: #4a4a4a; color: #eee; }

.main { flex: 1; min-height: 0; display: flex; }
.hgrip { display: block; flex: none; height: 4px; margin: 7px 2px 0 6px; background: radial-gradient(circle, #a8a8a8 0 1px, transparent 1px) 0 0 / 3px 3px; opacity: .85; }
.dock { width: 38px; flex: none; display: flex; flex-direction: column; }
.dock .hgrip { margin-left: 0; }
.dock-body { flex: 1; margin: 4px 0 2px; background: #303030; border-right: 2px solid #262626; display: flex; flex-direction: column; justify-content: flex-end; gap: 10px; }
.dock-play { width: 20px; height: 20px; margin-left: 8px; border-radius: 3px; background: #505050; border: 1px solid #222; }
.dock-play svg { width: 8px; height: 10px; }
.dock-layout { height: 45px; margin-left: 2px; display: grid; grid-template-columns: 15px 15px; grid-auto-rows: 13px; gap: 1px; align-content: center; align-items: stretch; justify-items: stretch; background: linear-gradient(#52648a, #3f80dc); border-radius: 3px 0 0 3px; }
.dock-layout span { background: #697282; border: 1px solid #334; }

.explorer { width: 354px; flex: none; display: flex; flex-direction: column; color: #fff; }
.exp-menu { display: flex; gap: 20px; padding: 1px 0 0 19px; height: 30px; align-items: center; }
.exp-search { display: flex; align-items: center; padding-left: 8px; height: 24px; }
.exp-search input { width: 150px; height: 23px; border: 1px solid #666; }
.clear { width: 25px; height: 24px; }
.clear svg { width: 11px; height: 11px; }
.sq { width: 24px; height: 24px; color: #cfcfcf; }
.sq svg { width: 18px; height: 18px; }
.on { background: #5c87c0; }
.vsep { width: 2px; height: 23px; margin: 0 2px; border-left: 1px solid #222; border-right: 1px solid #888; flex: none; }
.exp-body { flex: 1; min-height: 0; display: flex; margin-top: 1px; }
.exp-icons { width: 28px; padding: 4px 2px 0 4px; display: flex; flex-direction: column; gap: 3px; }
.exp-icons button { height: 20px; }
.exp-icons svg { width: 18px; height: 18px; }
.hsep { height: 2px; margin: 1px 2px 0; border-top: 1px solid #222; border-bottom: 1px solid #888; flex: none; }
.exp-tree { flex: 1; border: 1px solid #393939; }
.exp-tree table { width: 100%; border-collapse: separate; border-spacing: 0; table-layout: fixed; }
.exp-tree th { height: 21px; padding: 0 2px; border: 1px solid #5e5e5e; font-weight: normal; text-align: left; }
.col-name span { float: left; }
.col-name i { float: right; margin: 5px 0 0; border: 4px solid transparent; border-top: 0; border-bottom: 6px solid #fff; }
.exp-tree .col-frozen { width: 64px; padding-left: 1px; }
.exp-foot { height: 28px; flex: none; display: flex; align-items: center; padding: 0 2px 0 8px; margin-bottom: 2px; }
.combo-exp { width: 145px; height: 23px; margin-right: 15px; background: none; border-color: #666; color: #ff0; }
.combo-exp select { padding-left: 1px; }
.combo-exp::after { right: -12px; border-top-color: #111; border-top-width: 4px; }
.set-label { margin-left: 2px; }
.foot-more { margin: 0 0 14px auto; color: #5a5aa8; font-size: 14px; }

.viewports { position: relative; flex: 1; min-width: 0; display: grid; grid-template: 1fr 1fr / 1fr 1fr; gap: 5px; padding: 5px 4px 1px; }
.view { position: relative; min-width: 0; min-height: 0; overflow: hidden; background: #353535; border: 2px solid #3a3a3a; }
.view.active { border-color: #7e6728; background: linear-gradient(#161616, #4b4b4b 85%); }
.grid-canvas { position: absolute; inset: 0; width: 100%; height: 100%; }
.view-labels { position: relative; display: flex; align-items: center; gap: 3px; padding: 6px 0 0 4px; color: #ddd; }
.view-labels .plus { width: 19px; justify-content: flex-start; }
.view-labels svg { width: 12px; height: 12px; margin-left: 6px; }
.viewcube { position: absolute; right: 12px; top: 13px; width: 84px; height: 84px; }
.face-text { font: 17px "Noto Sans CJK SC", sans-serif; fill: #555a64; text-anchor: middle; }
.compass { font: 11px "Noto Sans CJK SC", sans-serif; fill: #aaa; text-anchor: middle; }
.compass.small { font-size: 9px; }
.axis { position: absolute; left: -3px; bottom: 14px; width: 64px; height: 48px; font: 12px "DejaVu Sans", sans-serif; }
.watermark { position: absolute; left: 124px; top: 244px; display: flex; align-items: center; gap: 3px; color: #c4c4c4; }
.watermark svg { width: 40px; height: 40px; }
.watermark strong { display: block; font: 500 23px/26px "Noto Sans CJK SC", sans-serif; }
.watermark span { display: block; margin-top: 3px; font: 600 14px/14px "DejaVu Sans", sans-serif; }

.command { width: 208px; flex: none; display: flex; flex-direction: column; }
.command .hgrip { margin: 7px 1px 0 2px; }
.cmd-tabs { display: flex; height: 28px; margin-top: 4px; background: #3a3a3a; }
.cmd-tabs button { width: 32px; border-right: 1px solid #333; }
.cmd-tabs .current { background: #444; }
.cmd-tabs svg { width: 18px; height: 18px; }
.cmd-cats { display: flex; gap: 2px; padding: 4px 3px 5px; }
.cmd-cats button { width: 24px; height: 24px; border-radius: 3px; }
.cmd-cats svg { width: 18px; height: 18px; }
.combo-cmd { height: 22px; margin-left: 2px; }
.cmd-body { flex: 1; min-height: 0; display: flex; margin-top: 5px; }
.rollouts { flex: 1; display: flex; flex-direction: column; gap: 4px; padding: 0 3px 0 2px; }
.cmd-scroll { width: 6px; background: #3a3a3a; }
.rollout { position: relative; background: #515151; border: 1px solid #3e3e3e; border-radius: 2px; padding: 0 4px 4px; }
.rollout h2 { display: flex; align-items: center; margin: 0; height: 18px; font: bold 13px/18px "Liberation Sans", "Noto Sans CJK SC", sans-serif; color: #fff; }
.rollout h2 i { border: 3px solid transparent; border-top: 5px solid #ccc; border-bottom: 0; margin: 0 7px 0 1px; }
.rollout h2 svg { width: 12px; height: 12px; margin-left: auto; }
.autogrid { display: flex; align-items: center; height: 27px; padding-left: 60px; gap: 5px; color: #8f8f8f; }
.autogrid input { appearance: none; width: 13px; height: 13px; border: 1px solid #464646; background: #5a5a5a; }
.type-grid { display: grid; grid-template-columns: 1fr 1fr; grid-auto-rows: 20px; gap: 5px; padding-top: 1px; }
.type-grid button { background: #626262; border-radius: 3px; box-shadow: 0 0 0 1px #484848; }
.smudge { position: absolute; left: 99px; bottom: 5px; width: 108px; height: 56px; }
.name-row { display: flex; gap: 5px; padding-top: 4px; }
.name-row input { flex: 1; height: 20px; background: #575757; border: 1px solid #4a4a4a; }
.swatch { width: 20px; height: 20px; background: #c4307f; border: 1px solid #000; }

.timeline { height: 65px; flex: none; display: flex; padding-top: 2px; }
.timeline .grip { height: 58px; margin: 4px 1px 0 0; }
.time-body { flex: 1; min-width: 0; display: flex; flex-direction: column; }
.slider-row { display: flex; gap: 2px; padding: 1px 2px 4px; font: 11px/14px "Liberation Mono", monospace; }
.slider-row button { height: 18px; background: #626262; border: 1px solid #505050; border-radius: 3px; }
.slider-row .step { width: 14px; background: #505050; }
.slider-row .slider { width: 124px; }
.track-row { flex: 1; display: flex; border-top: 1px solid #111; }
.curve { width: 51px; height: 24px; padding-right: 7px; }
.curve svg { width: 16px; height: 14px; }
.ruler { flex: 1; min-width: 0; height: 38px; margin-right: 49px; overflow: visible; background: #292929; font: 11px "Open Sans", "Noto Sans", sans-serif; }
.ruler text { fill: #bbb; text-anchor: middle; }

.status { height: 54px; flex: none; display: flex; align-items: flex-start; padding: 3px 10px 0 2px; }
.listener { width: 98px; display: flex; flex-direction: column; gap: 1px; }
.listener input { width: 100%; height: 23px; border: 2px solid #fff; border-top-color: #888; border-left-color: #aaa; background: #fff; color: #777; font: 11px "DejaVu Sans Mono", "Noto Sans CJK SC", monospace; padding: 0 4px; }
.listener .pink { background: #dcc4c6; }
.vbar { width: 3px; height: 50px; margin: -2px 4px 0 3px; border-left: 1px solid #555; border-right: 2px solid #141414; }
.prompt { flex: 1; min-width: 0; display: flex; flex-direction: column; color: #f0f0f0; }
.prompt-row { height: 25px; display: flex; align-items: center; }
.msg { width: 176px; flex: none; }
.ico { width: 27px; height: 20px; position: relative; color: #262626; }
.ico svg { width: 18px; height: 18px; }
.coord { display: flex; align-items: center; gap: 3px; margin-right: 12px; font: 11px "Liberation Mono", monospace; white-space: nowrap; }
.coord input { width: 58px; height: 19px; padding-left: 4px; background: #575757; border: 1px solid #4c4c4c; color: #8c8c8c; }
.gridsize, .tag { white-space: nowrap; color: inherit; text-decoration: none; }
.gridsize { margin-left: 4px; }
.hint { width: 369px; }
.bar { width: 2px; height: 18px; background: #161616; flex: none; }
.chip { width: 21px; height: 21px; margin: 0 6px; background: #626262; border-radius: 3px; }
.chip svg { width: 16px; height: 16px; }
.enable { width: 34px; }
.led { width: 10px; height: 10px; border-radius: 50%; background: #4fe04a; }
.zero b { width: 15px; height: 15px; line-height: 15px; border-radius: 50%; background: #f2f2f2; color: #333; text-align: center; }
.tagcube { width: 16px; height: 16px; margin: 0 7px 0 4px; }
.playback { display: flex; flex-direction: column; gap: 1px; margin-right: 11px; }
.playback > div { display: flex; align-items: center; gap: 2px; height: 24px; }
.playback button { width: 20px; height: 20px; position: relative; }
.playback svg { width: 16px; height: 16px; }
.playback .bar { height: 17px; }
.frame { display: flex; align-items: center; width: 68px; height: 17px; background: #626262; padding: 0 4px; font: 11px "Liberation Mono", monospace; }
.frame input { flex: 1; }
.frame svg { width: 6px; height: 12px; }
button svg.fly { position: absolute; right: 0; bottom: 0; width: 4px; height: 4px; }
.bigkey { width: 41px; height: 43px; margin: 2px 4px 0 0; background: #626262; border-radius: 3px; }
.bigkey svg { width: 32px; height: 32px; }
.keys { display: flex; flex-direction: column; gap: 3px; padding-top: 2px; margin-right: 5px; }
.keys button, .filters { height: 20px; padding: 0 2px; background: #626262; border-radius: 3px; box-shadow: 0 0 0 1px #4a4a4a; }
.keysel { width: 112px; padding-top: 2px; display: flex; flex-direction: column; gap: 3px; }
.combo-key { height: 20px; }
.keyrow { display: flex; gap: 4px; }
.keyrow .ico { width: 22px; }
.filters { flex: 1; overflow: hidden; }
.nav { display: grid; grid-template-columns: repeat(4, 20px); gap: 3px; margin-left: 15px; padding-top: 2px; }
.nav button { height: 20px; position: relative; }
.nav svg { width: 17px; height: 17px; }
```

FILE: app.js
```js
const NS = 'http://www.w3.org/2000/svg';

function line(svg, x1, y1, x2, y2, stroke, width) {
  const el = document.createElementNS(NS, 'line');
  Object.entries({ x1, y1, x2, y2, stroke, 'stroke-width': width || 1 })
    .forEach(([name, value]) => el.setAttribute(name, value));
  svg.appendChild(el);
}

function drawFlat(svg, w, h) {
  const pitch = 7.4;
  const cx = Math.floor(w / 2);
  const cy = Math.floor(h / 2);
  const n = Math.ceil(w / 2 / pitch);
  for (let i = -n; i <= n; i++) {
    if (i === 0) continue;
    const color = i % 10 === 0 ? '#484848' : '#666';
    const x = Math.round(cx + i * pitch) + 0.5;
    const y = Math.round(cy + i * pitch) + 0.5;
    line(svg, x, 0, x, h, color);
    line(svg, 0, y, w, y, color);
  }
  line(svg, cx + 0.5, 0, cx + 0.5, h, '#000');
  line(svg, 0, cy + 0.5, w, cy + 0.5, '#000');
}

function drawPerspective(svg, w, h) {
  const project = (u, v) => {
    const d = 1 - 0.1706 * (u + v);
    return [w / 2 + 70.8 * (u - v) / d, h / 2 + 35.3 * (u + v) / d];
  };
  const segment = (a, b, color) => line(svg, ...project(...a), ...project(...b), color);
  for (let i = -7; i <= 7; i++) {
    if (i === 0) continue;
    segment([i / 7, -1], [i / 7, 1], '#6c6c6c');
    segment([-1, i / 7], [1, i / 7], '#6c6c6c');
  }
  segment([0, -1], [0, 1], '#000');
  segment([-1, 0], [1, 0], '#000');
}

function drawRuler(svg) {
  const w = svg.clientWidth;
  svg.replaceChildren();
  line(svg, 0, 24.5, w, 24.5, '#444');
  line(svg, 0, 37, w, 37, '#3a3a3a', 2);
  line(svg, 5, 1, 5, 25, '#857a1e', 8);
  for (let i = 0; i <= 100; i++) {
    const x = Math.round(5 + (w - 9) * i / 100) + 0.5;
    line(svg, x, 0, x, i % 5 ? 12 : 25, '#6a6a6a');
    if (i % 5 === 0) {
      const label = document.createElementNS(NS, 'text');
      label.setAttribute('x', x - 0.5);
      label.setAttribute('y', 21);
      label.textContent = i;
      svg.appendChild(label);
    }
  }
}

function draw() {
  document.querySelectorAll('.grid-canvas').forEach(svg => {
    svg.replaceChildren();
    const fn = svg.dataset.grid === 'flat' ? drawFlat : drawPerspective;
    fn(svg, svg.clientWidth, svg.clientHeight);
  });
  drawRuler(document.querySelector('.ruler'));
}

draw();
window.addEventListener('resize', draw);
```
